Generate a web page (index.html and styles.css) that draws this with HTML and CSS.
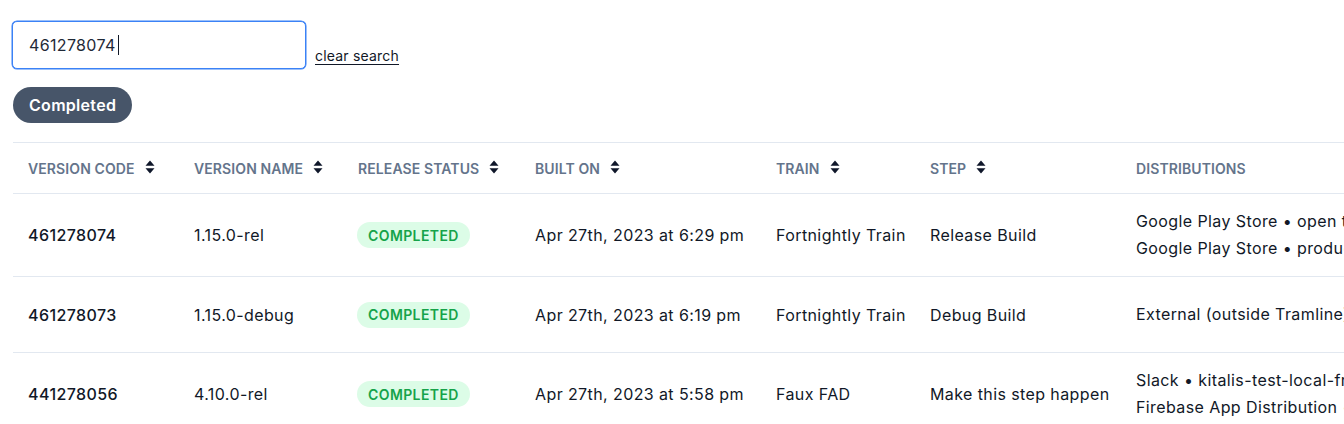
FILE: index.html
```html
<!DOCTYPE html>
<html>
<head>
<meta charset="utf-8">
<link rel="stylesheet" href="styles.css">
</head>
<body>
<div class="page">
  <div class="search-row">
    <div class="search-box">
      <input class="search-input" type="text" value="461278074">
      <span class="caret"></span>
    </div>
    <a class="clear-link" href="#">clear search</a>
  </div>
  <div class="filters">
    <span class="filter-pill">Completed</span>
  </div>
  <div class="table-wrap">
    <table class="builds">
      <colgroup>
        <col class="c1"><col class="c2"><col class="c3"><col class="c4"><col class="c5"><col class="c6"><col class="c7">
      </colgroup>
      <thead>
        <tr>
          <th><span class="th-inner">Version Code <svg class="sort" viewBox="0 0 10 14"><path d="M5 0.5 L9.5 5.8 H0.5 Z M5 13.5 L9.5 8.2 H0.5 Z"/></svg></span></th>
          <th><span class="th-inner">Version Name <svg class="sort" viewBox="0 0 10 14"><path d="M5 0.5 L9.5 5.8 H0.5 Z M5 13.5 L9.5 8.2 H0.5 Z"/></svg></span></th>
          <th><span class="th-inner">Release Status <svg class="sort" viewBox="0 0 10 14"><path d="M5 0.5 L9.5 5.8 H0.5 Z M5 13.5 L9.5 8.2 H0.5 Z"/></svg></span></th>
          <th><span class="th-inner">Built On <svg class="sort" viewBox="0 0 10 14"><path d="M5 0.5 L9.5 5.8 H0.5 Z M5 13.5 L9.5 8.2 H0.5 Z"/></svg></span></th>
          <th><span class="th-inner">Train <svg class="sort" viewBox="0 0 10 14"><path d="M5 0.5 L9.5 5.8 H0.5 Z M5 13.5 L9.5 8.2 H0.5 Z"/></svg></span></th>
          <th><span class="th-inner">Step <svg class="sort" viewBox="0 0 10 14"><path d="M5 0.5 L9.5 5.8 H0.5 Z M5 13.5 L9.5 8.2 H0.5 Z"/></svg></span></th>
          <th><span class="th-inner">Distributions</span></th>
        </tr>
      </thead>
      <tbody>
        <tr>
          <td class="code">461278074</td>
          <td>1.15.0-rel</td>
          <td><span class="badge">Completed</span></td>
          <td>Apr 27th, 2023 at 6:29 pm</td>
          <td>Fortnightly Train</td>
          <td>Release Build</td>
          <td class="dist"><div>Google Play Store • open testing</div><div>Google Play Store • production</div></td>
        </tr>
        <tr>
          <td class="code">461278073</td>
          <td>1.15.0-debug</td>
          <td><span class="badge">Completed</span></td>
          <td>Apr 27th, 2023 at 6:19 pm</td>
          <td>Fortnightly Train</td>
          <td>Debug Build</td>
          <td class="dist"><div>External (outside Tramline)</div></td>
        </tr>
        <tr>
          <td class="code">441278056</td>
          <td>4.10.0-rel</td>
          <td><span class="badge">Completed</span></td>
          <td>Apr 27th, 2023 at 5:58 pm</td>
          <td>Faux FAD</td>
          <td>Make this step happen</td>
          <td class="dist"><div>Slack • kitalis-test-local-fresh</div><div>Firebase App Distribution • testers</div></td>
        </tr>
      </tbody>
    </table>
  </div>
</div>
</body>
</html>
```

FILE: styles.css
```css
html, body {
  margin: 0;
  padding: 0;
  background: #ffffff;
  overflow: hidden;
}
body {
  font-family: Inter, "Noto Sans", sans-serif;
  color: #111827;
}
.page {
  padding: 21px 0 0 12px;
}
.search-row {
  display: flex;
  align-items: flex-end;
  gap: 9px;
}
.search-box {
  position: relative;
  display: flex;
}
.search-input {
  box-sizing: border-box;
  width: 294px;
  height: 48px;
  padding: 0 16px;
  border: 1px solid #3b82f6;
  border-radius: 5px;
  box-shadow: 0 0 0 0.5px #3b82f6;
  font-family: Inter, sans-serif;
  font-size: 16px;
  letter-spacing: 0.35px;
  color: #1f2937;
  outline: none;
}
.caret {
  position: absolute;
  left: 106px;
  top: 14px;
  width: 1px;
  height: 20px;
  background: #111827;
}
.clear-link {
  font-size: 14px;
  letter-spacing: 0.2px;
  color: #111827;
  text-decoration: underline;
  text-underline-offset: 3px;
  line-height: 16px;
  padding-bottom: 5px;
}
.filters {
  margin-top: 18px;
  display: flex;
}
.filter-pill {
  display: inline-flex;
  align-items: center;
  height: 36px;
  padding: 0 16px;
  margin-left: 1px;
  border-radius: 18px;
  background: #475569;
  color: #ffffff;
  font-weight: 600;
  font-size: 16px;
  letter-spacing: 0.3px;
}
.table-wrap {
  margin-top: 19px;
  margin-left: 1px;
  width: 1500px;
}
.builds {
  border-collapse: collapse;
  table-layout: fixed;
  width: 1500px;
}
.c1 { width: 166px; }
.c2 { width: 164px; }
.c3 { width: 177px; }
.c4 { width: 241px; }
.c5 { width: 154px; }
.c6 { width: 206px; }
.c7 { width: 392px; }
.builds thead tr {
  border-top: 1px solid #e2e8f0;
  border-bottom: 1px solid #e2e8f0;
}
.builds th {
  height: 50px;
  padding: 0 15px;
  text-align: left;
  font-size: 14px;
  font-weight: 600;
  letter-spacing: 0.1px;
  text-transform: uppercase;
  color: #64748b;
  vertical-align: middle;
  white-space: nowrap;
}
.th-inner {
  display: inline-flex;
  align-items: center;
  gap: 10px;
}
.sort {
  width: 10px;
  height: 14px;
  fill: #0f172a;
  margin-top: -3px;
}
.builds tbody tr {
  border-bottom: 1px solid #e2e8f0;
  height: 76px;
}
.builds td {
  padding: 14px 15px;
  font-size: 16px;
  letter-spacing: 0.4px;
  color: #111827;
  vertical-align: middle;
  white-space: nowrap;
}
.builds td.code {
  font-weight: 500;
}
.dist div {
  line-height: 27px;
}
.badge {
  display: inline-flex;
  align-items: center;
  height: 26px;
  padding: 0 11px;
  margin-left: -1px;
  border-radius: 13px;
  background: #dcfce7;
  color: #16a34a;
  font-size: 14px;
  font-weight: 600;
  letter-spacing: 0.4px;
  text-transform: uppercase;
}
```
